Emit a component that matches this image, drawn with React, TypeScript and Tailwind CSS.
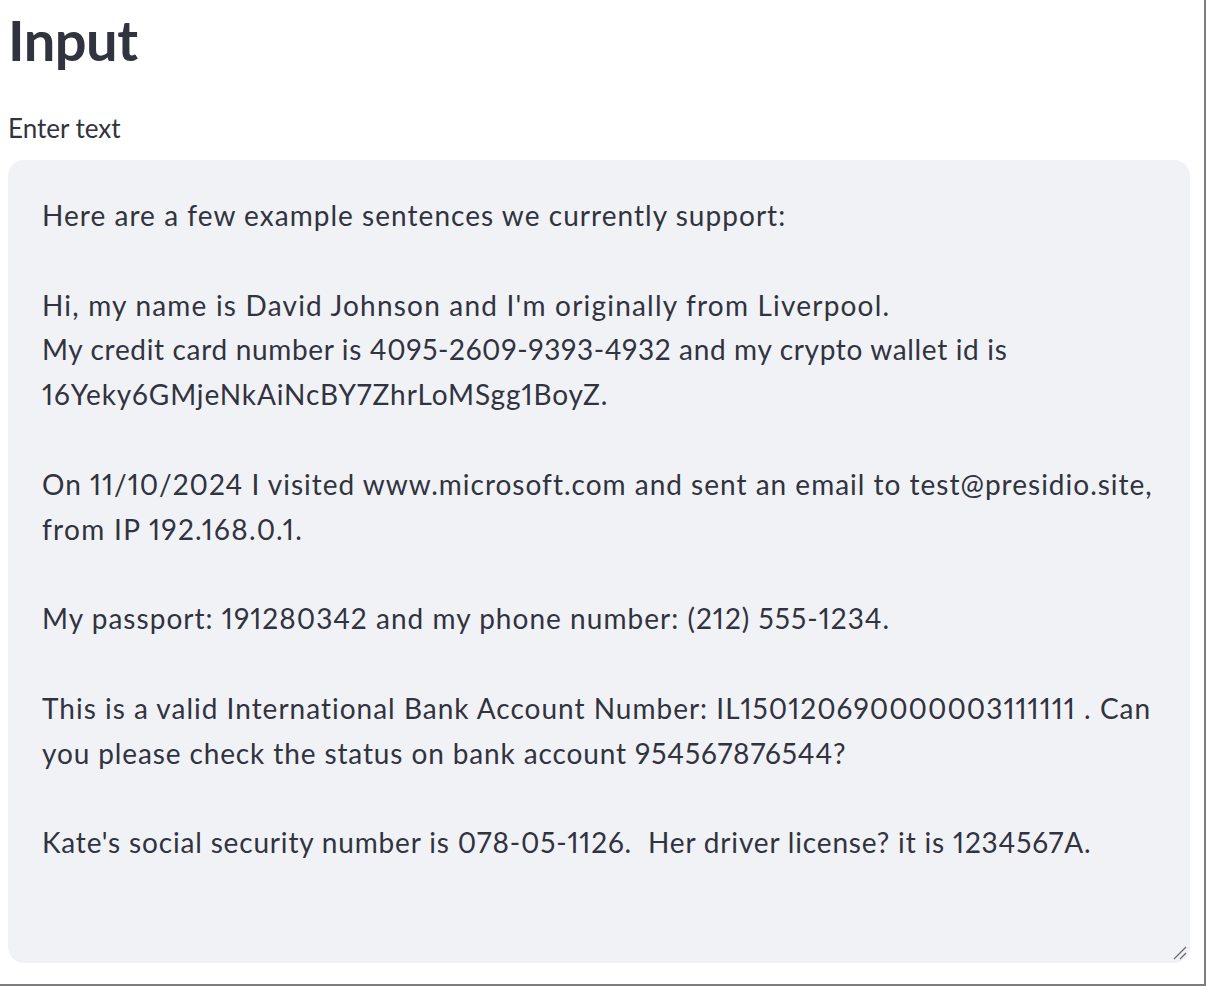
import React from "react";

const lines: { t: string; c: string }[] = [
  { t: "Here are a few example sentences we currently support:", c: "tracking-[1.04px]" },
  { t: "", c: "" },
  { t: "Hi, my name is David Johnson and I'm originally from Liverpool.", c: "tracking-[1.2px]" },
  { t: "My credit card number is 4095-2609-9393-4932 and my crypto wallet id is", c: "tracking-[0.66px]" },
  { t: "16Yeky6GMjeNkAiNcBY7ZhrLoMSgg1BoyZ.", c: "tracking-[0.89px]" },
  { t: "", c: "" },
  { t: "On 11/10/2024 I visited www.microsoft.com and sent an email to test@presidio.site,", c: "tracking-[1px]" },
  { t: "from IP 192.168.0.1.", c: "tracking-[1.3px]" },
  { t: "", c: "" },
  { t: "My passport: 191280342 and my phone number: (212) 555-1234.", c: "tracking-[1.03px]" },
  { t: "", c: "" },
  { t: "This is a valid International Bank Account Number: IL150120690000003111111 . Can", c: "tracking-[1px]" },
  { t: "you please check the status on bank account 954567876544?", c: "tracking-[0.88px]" },
  { t: "", c: "" },
  { t: "Kate's social security number is 078-05-1126.  Her driver license? it is 1234567A.", c: "tracking-[0.83px]" },
];

export default function App() {
  return (
    <div
      className="w-[1206px] h-[986px] bg-white border-r-2 border-b-2 border-[#7d7d7d] overflow-hidden text-[#31333f]"
      style={{ fontFamily: "Lato, 'Noto Sans', sans-serif" }}
    >
      <div className="pl-[8px] pr-[14px]">
        <h1 className="text-[56px] font-bold leading-[80px] tracking-[-0.5px]">Input</h1>
        <label className="block mt-[28px] text-[26px] leading-[40px] text-[#31333f]">Enter text</label>
        <div className="relative mt-[12px] h-[803px] rounded-[16px] bg-[#f0f2f6] pl-[34px] pr-[10px] pt-[33px]">
          <div className="text-[28px] leading-[44.8px] whitespace-pre proportional-nums">
            {lines.map((l, i) => (
              <div key={i} className={"h-[44.8px] " + l.c}>{l.t}</div>
            ))}
          </div>
          <svg
            className="absolute right-[3px] bottom-[3px]"
            width="14"
            height="14"
            viewBox="0 0 14 14"
          >
            <line x1="1" y1="13" x2="13" y2="1" stroke="#6b6b6b" strokeWidth="1.3" />
            <line x1="7" y1="13" x2="13" y2="7" stroke="#6b6b6b" strokeWidth="1.3" />
          </svg>
        </div>
      </div>
    </div>
  );
}
